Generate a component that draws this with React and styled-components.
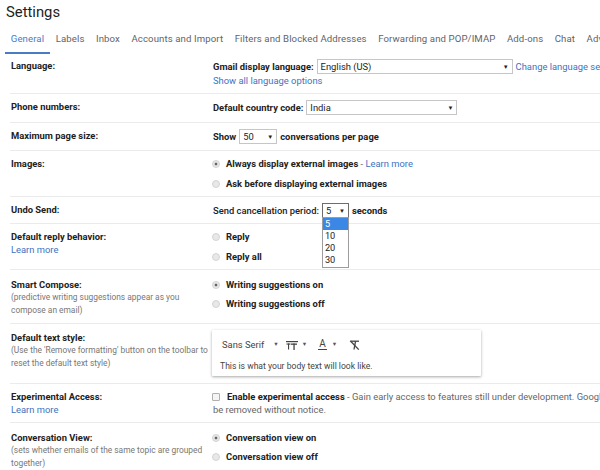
import styled, { createGlobalStyle } from 'styled-components';

const GlobalStyle = createGlobalStyle`
  html, body {
    margin: 0;
    padding: 0;
    background: #fff;
    overflow: hidden;
  }
  body {
    font-family: Roboto, "Liberation Sans", Arial, sans-serif;
    color: #222;
  }
`;

const Page = styled.div`
  width: 600px;
  height: 470px;
  overflow: hidden;
`;

const Title = styled.h1`
  margin: 0;
  padding: 2px 0 0 6px;
  height: 26px;
  font-size: 14.8px;
  font-weight: 400;
  line-height: 20px;
  color: #222;
`;

const Tabs = styled.div`
  display: flex;
  margin-left: 5px;
  height: 26px;
  white-space: nowrap;
`;

const Tab = styled.div`
  padding: 0 5.75px;
  font-size: 9.6px;
  letter-spacing: 0.11px;
  line-height: 22px;
  color: ${p => (p.$active ? '#4a7bc6' : '#5f6368')};
  border-bottom: 2px solid ${p => (p.$active ? '#4a7bc6' : 'transparent')};
  box-sizing: border-box;
`;

const List = styled.div`
  margin-left: 10px;
`;

const Row = styled.div`
  display: grid;
  grid-template-columns: 203px 1fr;
  padding: ${p => p.$pad || '6px 0 7px'};
  border-bottom: ${p => (p.$last ? 'none' : '1px solid #ebebeb')};
`;

const Label = styled.div`
  padding-left: 1px;
  font-size: 9.4px;
  line-height: 13px;
`;

const LabelTitle = styled.div`
  font-weight: bold;
  color: #222;
`;

const Hint = styled.div`
  font-size: 8.4px;
  line-height: 13px;
  color: #777;
`;

const Link = styled.span`
  color: #3d72c2;
  font-weight: normal;
`;

const Value = styled.div`
  font-size: 9.4px;
  line-height: 13px;
  display: flex;
  flex-direction: column;
  gap: ${p => p.$gap || '0px'};
  white-space: nowrap;
`;

const Line = styled.div`
  display: flex;
  align-items: center;
  height: ${p => p.$h || '13px'};
  font-weight: ${p => p.$weight || 'bold'};
  position: relative;
`;

const Select = styled.div`
  position: relative;
  display: flex;
  align-items: center;
  box-sizing: border-box;
  width: ${p => p.$w}px;
  height: 15px;
  margin: 0 3px;
  padding: 0 3px;
  border: 1px solid ${p => (p.$focused ? '#6d6d6d' : '#c6c6c6')};
  background: #fff;
  font-weight: normal;
  font-size: 9.4px;
  color: #222;
`;

const Arrow = styled.span`
  margin-left: auto;
  font-size: 6px;
  color: #222;
`;

const Menu = styled.div`
  position: absolute;
  top: 13px;
  left: -1px;
  width: 27px;
  box-sizing: border-box;
  border: 1px solid #9c9c9c;
  background: #fff;
  z-index: 5;
  padding-bottom: 1px;
`;

const MenuItem = styled.div`
  height: 12px;
  line-height: 12px;
  padding-left: 2px;
  font-size: 9.2px;
  background: ${p => (p.$selected ? '#3a87e6' : '#fff')};
  color: ${p => (p.$selected ? '#fff' : '#222')};
`;

const Radio = styled.span`
  width: 8px;
  height: 8px;
  box-sizing: border-box;
  border-radius: 50%;
  border: 1px solid #d2d2d2;
  background: radial-gradient(circle, ${p => (p.$checked ? '#666 0 1.2px, #e9e9e9 1.7px' : '#e8e8e8 0')});
  margin: 0 6px 0 -1px;
  flex: none;
`;

const Checkbox = styled.span`
  width: 8px;
  height: 8px;
  box-sizing: border-box;
  border: 1px solid #b0b0b0;
  border-radius: 1px;
  background: #f4f4f4;
  margin: 0 7px 0 -1px;
  flex: none;
`;

const Normal = styled.span`
  font-weight: normal;
  color: #666;
`;

const Medium = styled.span`
  font-weight: 500;
`;

const StyleBox = styled.div`
  width: 269px;
  height: 46px;
  box-sizing: border-box;
  margin-left: -1px;
  padding: 8px 10px 4px 8px;
  background: #fff;
  box-shadow: 0 1px 3px rgba(0, 0, 0, 0.35);
  border-radius: 1px;
`;

const Toolbar = styled.div`
  display: flex;
  align-items: center;
  height: 13px;
  margin-bottom: 9px;
  padding-left: 2px;
  color: #444;
  font-size: 9.4px;
`;

const Caret = styled.span`
  font-size: 5.5px;
  color: #555;
  margin: ${p => p.$m || '0 0 0 4px'};
`;

const ToolIcon = styled.span`
  display: inline-flex;
  align-items: center;
  margin-left: ${p => p.$ml || '10px'};
  color: #444;
`;

const ColorA = styled.span`
  font-size: 10px;
  line-height: 10px;
  border-bottom: 1.5px solid #444;
  padding: 0 1px;
`;

const BodyText = styled.div`
  font-size: 8.6px;
  line-height: 12px;
  color: #444;
`;

const Gap = styled.div`
  height: ${p => p.$h}px;
`;

const FontSizeIcon = () => (
  <svg width="12" height="10" viewBox="0 0 12 10" fill="#444">
    <rect x="0" y="1" width="12" height="1.2" />
    <rect x="0.5" y="3.5" width="4" height="1.1" />
    <rect x="2" y="3.5" width="1.1" height="6" />
    <rect x="5" y="3.5" width="6" height="1.3" />
    <rect x="7.4" y="3.5" width="1.3" height="6.5" />
  </svg>
);

const ClearFormatIcon = () => (
  <svg width="11" height="10" viewBox="0 0 11 10" fill="none" stroke="#444" strokeWidth="1.3">
    <path d="M2 1.2h8" />
    <path d="M6.6 1.2 5 9.5" />
    <path d="M1.2 0.8 9.8 9.6" />
  </svg>
);

const tabs = [
  'General',
  'Labels',
  'Inbox',
  'Accounts and Import',
  'Filters and Blocked Addresses',
  'Forwarding and POP/IMAP',
  'Add-ons',
  'Chat',
  'Advanced',
];

const RadioOption = ({ checked, children }) => (
  <Line>
    <Radio $checked={checked} />
    {children}
  </Line>
);

export default function App() {
  return (
    <Page>
      <GlobalStyle />
      <Title>Settings</Title>
      <Tabs>
        {tabs.map((t, i) => (
          <Tab key={t} $active={i === 0}>
            {t}
          </Tab>
        ))}
      </Tabs>
      <List>
        <Row $pad="5px 0 6px">
          <Label>
            <LabelTitle>Language:</LabelTitle>
          </Label>
          <Value>
            <Line $h="14px">
              Gmail display language:
              <Select $w={196}>
                English (US)
                <Arrow>▼</Arrow>
              </Select>
              <Link>Change language settings for other Google products</Link>
            </Line>
            <Line $h="14px" $weight="normal">
              <Link>Show all language options</Link>
            </Line>
          </Value>
        </Row>

        <Row>
          <Label>
            <LabelTitle>Phone numbers:</LabelTitle>
          </Label>
          <Value>
            <Line $h="15px">
              Default country code:
              <Select $w={151}>
                India
                <Arrow>▼</Arrow>
              </Select>
            </Line>
          </Value>
        </Row>

        <Row $pad="6px 0 6px">
          <Label>
            <LabelTitle>Maximum page size:</LabelTitle>
          </Label>
          <Value>
            <Line $h="15px">
              Show
              <Select $w={38}>
                50
                <Arrow>▼</Arrow>
              </Select>
              conversations per page
            </Line>
          </Value>
        </Row>

        <Row $pad="6px 0 6px">
          <Label>
            <LabelTitle>Images:</LabelTitle>
          </Label>
          <Value $gap="7px">
            <RadioOption checked>
              Always display external images<Normal>&nbsp;- </Normal>
              <Link>&nbsp;Learn more</Link>
            </RadioOption>
            <RadioOption>Ask before displaying external images</RadioOption>
          </Value>
        </Row>

        <Row $pad="6px 0 5px">
          <Label>
            <LabelTitle>Undo Send:</LabelTitle>
          </Label>
          <Value>
            <Line $h="15px">
              <Medium>Send cancellation period:</Medium>
              <Select $w={27} $focused>
                5
                <Arrow>▼</Arrow>
                <Menu>
                  <MenuItem $selected>5</MenuItem>
                  <MenuItem>10</MenuItem>
                  <MenuItem>20</MenuItem>
                  <MenuItem>30</MenuItem>
                </Menu>
              </Select>
              seconds
            </Line>
          </Value>
        </Row>

        <Row $pad="6px 0 6px">
          <Label>
            <LabelTitle>Default reply behavior:</LabelTitle>
            <Link>Learn more</Link>
          </Label>
          <Value $gap="7px">
            <RadioOption>Reply</RadioOption>
            <RadioOption>Reply all</RadioOption>
          </Value>
        </Row>

        <Row $pad="8px 0 6px">
          <Label>
            <LabelTitle>Smart Compose:</LabelTitle>
            <Hint>
              (predictive writing suggestions appear as you
              <br />
              compose an email)
            </Hint>
          </Label>
          <Value $gap="6px">
            <RadioOption checked>Writing suggestions on</RadioOption>
            <RadioOption>Writing suggestions off</RadioOption>
          </Value>
        </Row>

        <Row $pad="6px 0 7px">
          <Label>
            <Gap $h={1} />
            <LabelTitle>Default text style:</LabelTitle>
            <Hint>
              (Use the 'Remove formatting' button on the toolbar to
              <br />
              reset the default text style)
            </Hint>
          </Label>
          <Value>
            <StyleBox>
              <Toolbar>
                Sans Serif
                <Caret $m="0 0 0 9px">▼</Caret>
                <ToolIcon $ml="7px">
                  <FontSizeIcon />
                </ToolIcon>
                <Caret>▼</Caret>
                <ToolIcon $ml="11px">
                  <ColorA>A</ColorA>
                </ToolIcon>
                <Caret $m="0 0 0 5px">▼</Caret>
                <ToolIcon $ml="12px">
                  <ClearFormatIcon />
                </ToolIcon>
              </Toolbar>
              <BodyText>This is what your body text will look like.</BodyText>
            </StyleBox>
          </Value>
        </Row>

        <Row $pad="6px 0 6px">
          <Label>
            <LabelTitle>Experimental Access:</LabelTitle>
            <Link>Learn more</Link>
          </Label>
          <Value>
            <Line>
              <Checkbox />
              Enable experimental access
              <Normal>
                &nbsp;- Gain early access to features still under development. Google may change or
                discontinue experimental features at any time, and they may
              </Normal>
            </Line>
            <Line $weight="normal">
              <Normal>be removed without notice.</Normal>
            </Line>
          </Value>
        </Row>

        <Row $pad="8px 0 6px" $last>
          <Label>
            <LabelTitle>Conversation View:</LabelTitle>
            <Hint>
              (sets whether emails of the same topic are grouped
              <br />
              together)
            </Hint>
          </Label>
          <Value $gap="6px">
            <RadioOption checked>Conversation view on</RadioOption>
            <RadioOption>Conversation view off</RadioOption>
          </Value>
        </Row>
      </List>
    </Page>
  );
}
